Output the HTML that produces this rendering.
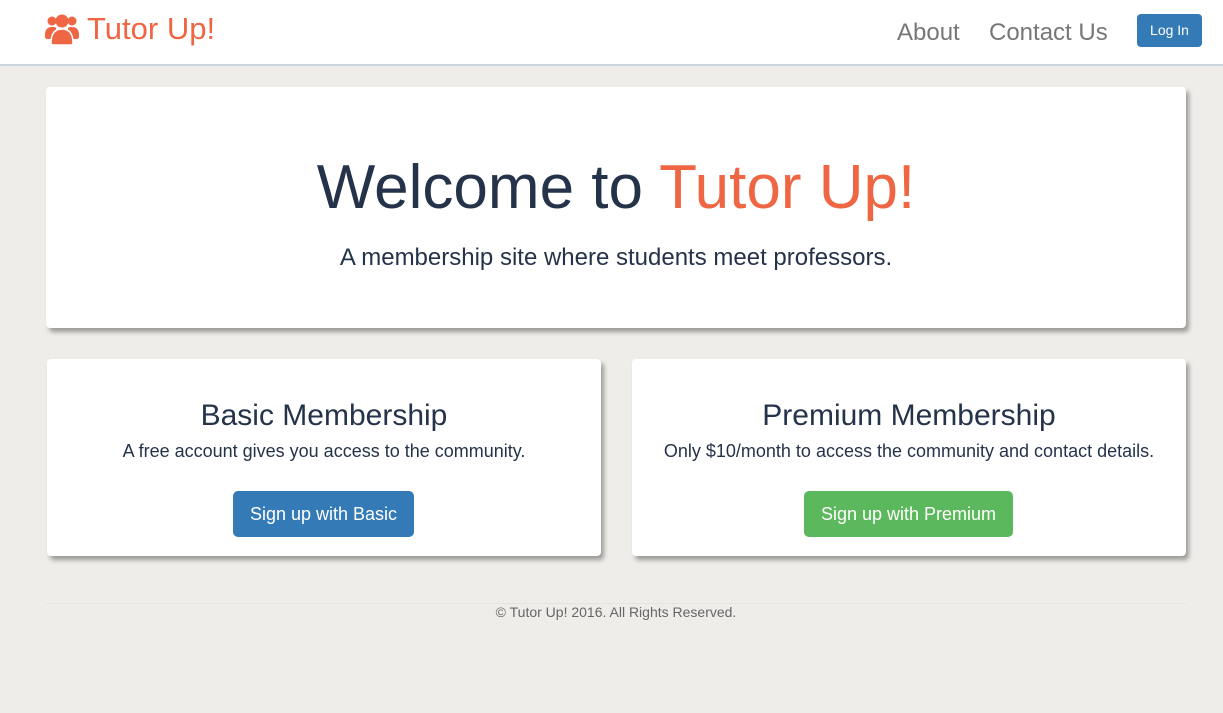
<!DOCTYPE html>
<html><head><style>
*{margin:0;padding:0;box-sizing:border-box}
body{width:1223px;height:713px;background:#efede9;font-family:"Liberation Sans",sans-serif;position:relative;overflow:hidden}
.hdr{position:absolute;left:0;top:0;width:1223px;height:66px;background:#fff;border-bottom:2px solid #cdd6df}
.logo{position:absolute;left:45px;top:11px;color:#ee6643;font-size:31px;display:flex;align-items:center}
.nav{position:absolute;top:19px;font-size:24px;color:#777}
.login{position:absolute;left:1137px;top:14px;width:65px;height:33px;background:#337ab7;border-radius:4px;color:#fff;font-size:14px;text-align:center;line-height:33px}
.box{position:absolute;background:#fff;border-radius:4px;box-shadow:3px 4px 5px rgba(0,0,0,.35);text-align:center;color:#25334a}
.btn{position:absolute;height:46px;border-radius:5px;color:#fff;font-size:18px;line-height:46px;text-align:center}
</style></head><body>
<div class="hdr">
<div class="logo"><svg width="34" height="32" viewBox="0 0 34 32" style="margin-right:8px"><g fill="#ee6643"><circle cx="7" cy="8" r="4.5"/><circle cx="27" cy="8" r="4.5"/><circle cx="17" cy="8" r="6.5"/><path d="M0 22c0-6 3-8 7-8s4 1 4 1v11H2c-1 0-2-1-2-2z"/><path d="M34 22c0-6-3-8-7-8s-4 1-4 1v11h9c1 0 2-1 2-2z"/><path d="M6 30c0-10 4-14 11-14s11 4 11 14c0 1-1 2-2 2H8c-1 0-2-1-2-2z" stroke="#fff" stroke-width="1.5"/></g></svg>Tutor Up!</div>
<div class="nav" style="left:897px">About</div>
<div class="nav" style="left:989px">Contact Us</div>
<div class="login">Log In</div>
</div>
<div class="box" style="left:46px;top:87px;width:1140px;height:241px">
<div style="position:absolute;left:0;right:0;top:64px;font-size:62px;line-height:74px">Welcome to <span style="color:#ee6643">Tutor Up!</span></div>
<div style="position:absolute;left:0;right:0;top:157px;font-size:24px">A membership site where students meet professors.</div>
</div>
<div class="box" style="left:47px;top:359px;width:554px;height:197px">
<div style="margin-top:40px;font-size:30px">Basic Membership</div>
<div style="margin-top:8px;font-size:18px">A free account gives you access to the community.</div>
<div class="btn" style="left:186px;top:132px;width:181px;background:#337ab7">Sign up with Basic</div>
</div>
<div class="box" style="left:632px;top:359px;width:554px;height:197px">
<div style="margin-top:40px;font-size:30px">Premium Membership</div>
<div style="margin-top:8px;font-size:18px">Only $10/month to access the community and contact details.</div>
<div class="btn" style="left:172px;top:132px;width:209px;background:#5cb85c">Sign up with Premium</div>
</div>
<div style="position:absolute;left:46px;top:603px;width:1140px;border-top:1px solid #e6e4e0"></div>
<div style="position:absolute;left:0;width:1232px;top:604px;text-align:center;font-size:14px;color:#666">© Tutor Up! 2016. All Rights Reserved.</div>
</body></html>
